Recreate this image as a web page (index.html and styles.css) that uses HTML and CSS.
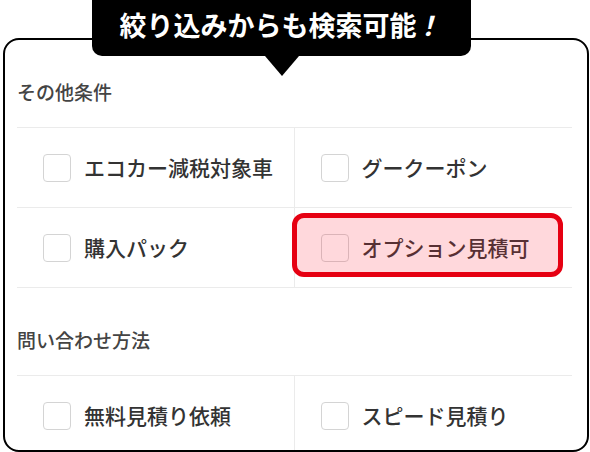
FILE: index.html
```html
<!DOCTYPE html>
<html lang="ja">
<head>
  <meta charset="UTF-8" />
  <meta name="viewport" content="width=device-width, initial-scale=1.0"/>
  <title>絞り込み検索</title>
  <link rel="stylesheet" href="styles.css">
</head>
<body>

  <div class="filter-wrap">
    <div class="callout">絞り込みからも検索可能<span class="bang">！</span></div>

    <div class="filter-card">
      <div class="group-title">その他条件</div>
      <div class="option-grid">
        <label class="option"><span class="check"></span>エコカー減税対象車</label>
        <label class="option"><span class="check"></span>グークーポン</label>
        <label class="option"><span class="check"></span>購入パック</label>
        <label class="option marked"><span class="check"></span>オプション見積可</label>
      </div>

      <div class="group-title">問い合わせ方法</div>
      <div class="option-grid">
        <label class="option"><span class="check"></span>無料見積り依頼</label>
        <label class="option"><span class="check"></span>スピード見積り</label>
      </div>
    </div>
  </div>

</body>
</html>
```

FILE: styles.css
```css
body {
  margin: 0;
  padding: 0;
  background-color: #fff;
  font-family: "Noto Sans CJK JP", "Noto Sans", sans-serif;
  color: #333;
}

.filter-wrap {
  position: relative;
  width: 590px;
  height: 452px;
  padding-top: 38px;
  box-sizing: border-box;
  overflow: hidden;
}

/* speech bubble over the card */
.callout {
  position: absolute;
  top: -10px;
  left: 92px;
  width: 379px;
  height: 66px;
  padding-top: 10px;
  box-sizing: border-box;
  background-color: #000;
  color: #fff;
  border-radius: 10px;
  font-size: 27px;
  font-weight: bold;
  line-height: 50px;
  text-align: center;
  z-index: 2;
}

.callout::after {
  content: "";
  position: absolute;
  left: 173px;
  bottom: -20px;
  border-left: 17px solid transparent;
  border-right: 17px solid transparent;
  border-top: 20px solid #000;
}

.callout .bang {
  display: inline-block;
  transform: skewX(-14deg);
}

.filter-card {
  margin-left: 3px;
  width: 586px;
  height: 414px;
  box-sizing: border-box;
  border: 2px solid #000;
  border-radius: 16px;
  padding: 0 15px 0 12px;
  overflow: hidden;
}

.group-title {
  padding: 40px 0 23px 0;
  font-size: 19px;
  font-weight: 500;
  line-height: 24px;
  color: #444;
}

.option-grid {
  display: grid;
  grid-template-columns: 1fr 1fr;
  border-top: 1px solid #ebebeb;
}

.option {
  position: relative;
  display: flex;
  align-items: center;
  gap: 13px;
  height: 79px;
  padding-left: 26px;
  border-bottom: 1px solid #ebebeb;
  font-size: 21px;
  font-weight: 500;
  line-height: 1;
  color: #333;
}

.option:nth-child(odd) {
  border-right: 1px solid #ebebeb;
}

.check {
  width: 28px;
  height: 28px;
  box-sizing: border-box;
  border: 1px solid #d4d4d4;
  border-radius: 4px;
  background-color: #fff;
}

/* red marker drawn on top of a cell */
.option.marked::after {
  content: "";
  position: absolute;
  top: 5px;
  bottom: 10px;
  left: -3px;
  right: 9px;
  border: 5px solid #e60012;
  border-radius: 12px;
  background-color: rgba(255, 40, 60, 0.18);
  pointer-events: none;
}
```
